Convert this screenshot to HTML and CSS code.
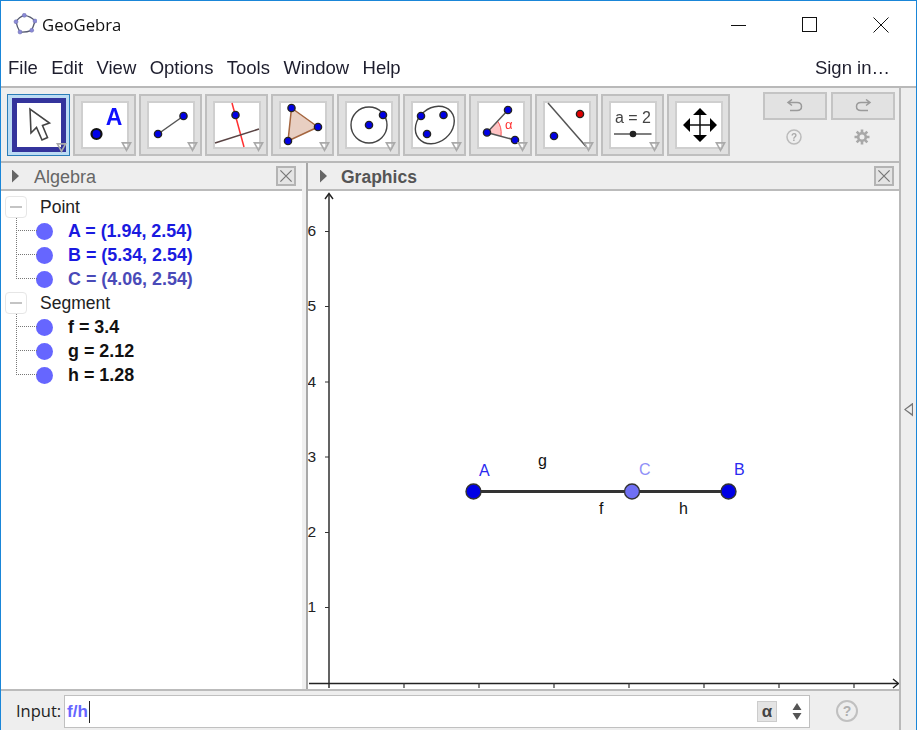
FILE: index.html
```html
<!DOCTYPE html>
<html lang="en">
<head>
<meta charset="utf-8">
<title>GeoGebra</title>
<link rel="stylesheet" href="styles.css">
</head>
<body>
<div class="window">
  <header class="titlebar">
    <svg class="app-logo" width="24" height="24" viewBox="0 0 24 24">
      <path class="logo-line" d="M11.300 2.300 Q17.500 3 22 8 Q20.500 13 18.700 17.300 Q13 19.500 7 19 Q4 14 3 8.700 Q6 4 11.300 2.300Z"/>
      <circle class="logo-dot" cx="11.300" cy="2.300" r="2"/>
      <circle class="logo-dot" cx="22" cy="8" r="2"/>
      <circle class="logo-dot" cx="18.700" cy="17.300" r="2"/>
      <circle class="logo-dot" cx="7" cy="19" r="2"/>
      <circle class="logo-dot" cx="3" cy="8.700" r="2"/>
    </svg>
    <span class="app-name">GeoGebra</span>
    <div class="window-controls">
      <svg class="wc wc-min" width="16" height="16" viewBox="0 0 16 16"><path d="M0 8.500H15"/></svg>
      <svg class="wc wc-max" width="16" height="16" viewBox="0 0 16 16"><rect x="0.500" y="0.500" width="14" height="14"/></svg>
      <svg class="wc wc-close" width="16" height="16" viewBox="0 0 16 16"><path d="M0.500 0.500L15.500 15.500M15.500 0.500L0.500 15.500"/></svg>
    </div>
  </header>

  <nav class="menubar">
    <span class="menu-item">File</span>
    <span class="menu-item">Edit</span>
    <span class="menu-item">View</span>
    <span class="menu-item">Options</span>
    <span class="menu-item">Tools</span>
    <span class="menu-item">Window</span>
    <span class="menu-item">Help</span>
    <span class="menu-item sign-in">Sign in…</span>
  </nav>

  <div class="workspace">
    <div class="content">
      <div class="toolbar">
        <div class="tools">
          <div class="tool tool-active"><div class="face face-active">
            <svg class="glyph" viewBox="0 0 44 44"><path class="cursor" d="M13 6L14 30L19.500 24.500L25 37L30.500 34.500L25.500 22.500L32.500 20Z"/></svg>
          </div><i class="caret"></i></div>

          <div class="tool"><div class="face">
            <svg class="glyph" viewBox="0 0 44 44"><circle class="pt pt-big" cx="13.500" cy="31" r="5"/><text class="big-a" x="31" y="22">A</text></svg>
          </div><i class="caret"></i></div>

          <div class="tool"><div class="face">
            <svg class="glyph" viewBox="0 0 44 44"><path class="ln" d="M9 31L34.500 13"/><circle class="pt" cx="9" cy="31" r="3.600"/><circle class="pt" cx="34.500" cy="13" r="3.600"/></svg>
          </div><i class="caret"></i></div>

          <div class="tool"><div class="face">
            <svg class="glyph" viewBox="0 0 44 44"><path class="ln-red" d="M17 0L29 44"/><path class="ln-brown" d="M0 40L44 26"/><circle class="pt" cx="20.500" cy="12" r="3.600"/></svg>
          </div><i class="caret"></i></div>

          <div class="tool"><div class="face">
            <svg class="glyph" viewBox="0 0 44 44"><path class="poly" d="M10.500 5L37 24L7 38Z"/><circle class="pt" cx="10.500" cy="5" r="3.600"/><circle class="pt" cx="37" cy="24" r="3.600"/><circle class="pt" cx="7" cy="38" r="3.600"/></svg>
          </div><i class="caret"></i></div>

          <div class="tool"><div class="face">
            <svg class="glyph" viewBox="0 0 44 44"><circle class="ring" cx="22" cy="22" r="18"/><circle class="pt" cx="22" cy="22" r="3.600"/><circle class="pt" cx="36" cy="12" r="3.600"/></svg>
          </div><i class="caret"></i></div>

          <div class="tool"><div class="face">
            <svg class="glyph" viewBox="0 0 44 44"><ellipse class="ring" cx="21.800" cy="22" rx="21" ry="17" transform="rotate(-40 21.800 22)"/><circle class="pt" cx="8" cy="13" r="3.600"/><circle class="pt" cx="30.500" cy="12" r="3.600"/><circle class="pt" cx="14" cy="31" r="3.600"/></svg>
          </div><i class="caret"></i></div>

          <div class="tool"><div class="face">
            <svg class="glyph" viewBox="0 0 44 44"><path class="wedge" d="M8 29.500L18.500 18Q23 24 22 33Z"/><path class="wedge-arc" d="M18.500 18Q23 24 22 33"/><path class="ln" d="M29 7L8 29.500L36 37"/><circle class="pt" cx="29" cy="7" r="3.600"/><circle class="pt" cx="8" cy="29.500" r="3.600"/><circle class="pt" cx="36" cy="37" r="3.600"/><text class="alpha" x="26" y="26">α</text></svg>
          </div><i class="caret"></i></div>

          <div class="tool"><div class="face">
            <svg class="glyph" viewBox="0 0 44 44"><path class="ln" d="M3 0L41 43.500"/><circle class="pt" cx="9" cy="33" r="3.600"/><circle class="pt pt-red" cx="35" cy="11" r="3.600"/></svg>
          </div><i class="caret"></i></div>

          <div class="tool"><div class="face">
            <svg class="glyph" viewBox="0 0 44 44"><text class="slider-text" x="22" y="20">a = 2</text><path class="ln" d="M3 31H40.500"/><circle class="knob" cx="22" cy="31" r="3.300"/></svg>
          </div><i class="caret"></i></div>

          <div class="tool"><div class="face">
            <svg class="glyph" viewBox="0 0 44 44"><path class="move-line" d="M23 8V36M9 22H37"/><path class="move-head" d="M23 5L30 12H16ZM23 39L30 32H16ZM6 22L13 15V29ZM40 22L33 15V29Z"/></svg>
          </div><i class="caret"></i></div>
        </div>

        <div class="history">
          <div class="history-row">
            <div class="hist-btn"><svg width="18" height="14" viewBox="0 0 18 14"><path class="hist-arrow" d="M2 3.500H11Q15.500 3.500 15.500 7.500Q15.500 11.500 11 11.500H4M6 0.500L2 3.500L6 6.500"/></svg></div>
            <div class="hist-btn"><svg width="18" height="14" viewBox="0 0 18 14"><path class="hist-arrow" d="M16 3.500H7Q2.500 3.500 2.500 7.500Q2.500 11.500 7 11.500H14M12 0.500L16 3.500L12 6.500"/></svg></div>
          </div>
          <div class="history-row history-icons">
            <div class="hist-icon">
              <svg width="16" height="16" viewBox="0 0 16 16"><circle class="help-ring" cx="8" cy="8" r="7"/><text class="help-mark" x="8" y="11.500">?</text></svg>
            </div>
            <div class="hist-icon">
              <svg width="16" height="16" viewBox="0 0 16 16"><path class="gear-teeth" d="M8 0.500V15.500M0.500 8H15.500M2.700 2.700L13.300 13.300M13.300 2.700L2.700 13.300"/><circle class="gear-body" cx="8" cy="8" r="3.800"/></svg>
            </div>
          </div>
        </div>
      </div>

      <div class="main">
        <section class="algebra">
          <div class="panel-header">
            <i class="tri"></i><span class="panel-title">Algebra</span>
            <svg class="close close-a" width="20" height="20" viewBox="0 0 20 20"><path d="M3 3L17 17M17 3L3 17"/></svg>
          </div>
          <div class="tree">
            <div class="category"><span class="expander"><i></i></span><span class="cat-name">Point</span></div>
            <div class="leaf"><i class="dot"></i><span class="val val-blue">A = (1.94, 2.54)</span></div>
            <div class="leaf"><i class="dot"></i><span class="val val-blue">B = (5.34, 2.54)</span></div>
            <div class="leaf leaf-last"><i class="dot"></i><span class="val val-dep">C = (4.06, 2.54)</span></div>
            <div class="category"><span class="expander"><i></i></span><span class="cat-name">Segment</span></div>
            <div class="leaf"><i class="dot"></i><span class="val">f = 3.4</span></div>
            <div class="leaf"><i class="dot"></i><span class="val">g = 2.12</span></div>
            <div class="leaf leaf-last"><i class="dot"></i><span class="val">h = 1.28</span></div>
          </div>
        </section>
        <div class="divider"></div>
        <section class="graphics">
          <div class="panel-header">
            <i class="tri tri-g"></i><span class="panel-title panel-title-g">Graphics</span>
            <svg class="close" width="20" height="20" viewBox="0 0 20 20"><path d="M3 3L17 17M17 3L3 17"/></svg>
          </div>
          <svg class="canvas" viewBox="308 191 591 498">
            <path class="axis" d="M329 194V688M309 683.500H898"/>
            <path class="axis-head" d="M325 199L329 193.500L333 199M893 679L898.500 683.500L893 688"/>
            <path class="tick" d="M325 231.500H329M325 306.500H329M325 382H329M325 457H329M325 532.500H329M325 607.500H329M404 683V688M479 683V688M554 683V688M629 683V688M704 683V688M779 683V688M854 683V688"/>
            <text class="ax-label" x="307.500" y="236">6</text>
            <text class="ax-label" x="307.500" y="311">5</text>
            <text class="ax-label" x="307.500" y="387">4</text>
            <text class="ax-label" x="307.500" y="462">3</text>
            <text class="ax-label" x="307.500" y="537">2</text>
            <text class="ax-label" x="307.500" y="612">1</text>
            <path class="segment" d="M473 491.500H728"/>
            <circle class="g-pt" cx="473.500" cy="491.500" r="7.500"/>
            <circle class="g-pt" cx="728.500" cy="491.500" r="7.500"/>
            <circle class="g-pt g-pt-dep" cx="632" cy="491.500" r="7.500"/>
            <text class="g-label g-blue" x="479" y="476">A</text>
            <text class="g-label g-blue" x="734" y="475">B</text>
            <text class="g-label g-light" x="639" y="475">C</text>
            <text class="g-label" x="538" y="466">g</text>
            <text class="g-label" x="599" y="514">f</text>
            <text class="g-label" x="679" y="514">h</text>
          </svg>
        </section>
      </div>

      <div class="inputbar">
        <label class="input-label">Input:</label>
        <div class="input-field">
          <span class="input-text">f/h</span><i class="text-cursor"></i>
          <span class="alpha-btn">α</span>
          <svg class="spinner" width="10" height="17" viewBox="0 0 10 17"><path d="M5 0L9.500 7H0.500ZM5 17L9.500 10H0.500Z"/></svg>
        </div>
        <svg class="input-help" width="24" height="24" viewBox="0 0 24 24"><circle class="help-ring help-ring-l" cx="12" cy="12" r="10"/><text class="help-mark help-mark-l" x="12" y="17">?</text></svg>
      </div>
    </div>
    <aside class="strip"><i class="strip-tri"></i></aside>
  </div>
</div>
</body>
</html>
```

FILE: styles.css
```css
* { box-sizing: border-box; }
html, body { margin: 0; padding: 0; }
body {
  width: 917px;
  height: 730px;
  overflow: hidden;
  background: #fff;
  font-family: "Liberation Sans", Arial, sans-serif;
  color: #111;
}
i { display: block; }

.window {
  width: 917px;
  height: 730px;
  display: flex;
  flex-direction: column;
  border: 1px solid #1a86d8;
  border-bottom: 0;
  filter: blur(0.35px);
}

/* title bar */
.titlebar {
  height: 49px;
  flex: none;
  display: flex;
  align-items: center;
  padding-left: 12px;
  padding-bottom: 2px;
}
.app-logo { flex: none; }
.logo-line { fill: none; stroke: #555a70; stroke-width: 1.300; }
.logo-dot { fill: #8a8ad8; stroke: #6a6aa8; stroke-width: 0.500; }
.app-name {
  margin-left: 5px;
  font: 16.700px "Open Sans", sans-serif;
  color: #111;
}
.window-controls {
  margin-left: auto;
  display: flex;
  align-items: center;
  padding-right: 27px;
  gap: 55px;
}
.wc { fill: none; stroke: #111; stroke-width: 1; display: block; }

/* menu */
.menubar {
  height: 36px;
  flex: none;
  display: flex;
  align-items: center;
  padding-left: 7px;
  padding-right: 26px;
  gap: 13.400px;
  font-size: 18.500px;
  color: #1d1d2d;
}
.menu-item { line-height: 36px; }
.sign-in { margin-left: auto; }

/* workspace */
.workspace { flex: 1; min-height: 0; display: flex; }
.content { flex: 1; min-width: 0; display: flex; flex-direction: column; }
.strip {
  width: 17px;
  flex: none;
  background: #eee;
  border-left: 2px solid #b9b9b9;
  border-top: 2px solid #b9b9b9;
  display: flex;
  align-items: center;
  justify-content: center;
  padding-top: 1px;
}
.strip-tri {
  width: 9px;
  height: 14px;
  background: #777;
  clip-path: polygon(100% 0, 100% 100%, 0 50%, 100% 0, 88% 20%, 20% 50%, 88% 80%, 88% 20%);
}

/* toolbar */
.toolbar {
  height: 77px;
  flex: none;
  background: #eee;
  border-top: 2px solid #b9b9b9;
  border-bottom: 2px solid #b9b9b9;
  display: flex;
  padding: 4px 0 0 6px;
}
.tools { display: flex; gap: 3px; padding-top: 2px; }
.tool {
  position: relative;
  width: 63px;
  height: 62px;
  background: #e0e0e0;
  border: 2px solid #bfbfbf;
  display: flex;
  align-items: center;
  justify-content: center;
}
.face {
  width: 48px;
  height: 48px;
  background: #fff;
  border: 2px solid #cfcfcf;
}
.tool-active {
  background: #bcdcf4;
  border: 1px solid #2b7db8;
}
.face-active {
  width: 54px;
  height: 54px;
  border: 5px solid #34349c;
  display: flex;
  align-items: center;
  justify-content: center;
}
.glyph { width: 44px; height: 44px; display: block; overflow: visible; }
.caret {
  position: absolute;
  right: 2px;
  bottom: 2px;
  width: 11px;
  height: 10px;
  background: #aaa;
  clip-path: polygon(0 0, 100% 0, 50% 100%, 0 0, 25% 18%, 50% 68%, 75% 18%, 25% 18%);
}

.cursor { fill: #fff; stroke: #444; stroke-width: 1.600; stroke-linejoin: miter; }
.pt { fill: #0000e6; stroke: #222; stroke-width: 1.400; }
.pt-big { stroke: #111; stroke-width: 2.200; }
.pt-red { fill: #e00000; }
.ln { stroke: #555; stroke-width: 1.500; fill: none; }
.ln-red { stroke: #ff3030; stroke-width: 1.500; fill: none; }
.ln-brown { stroke: #5a4444; stroke-width: 1.500; fill: none; }
.poly { fill: #e8cfc2; stroke: #a5663f; stroke-width: 1.500; }
.ring { fill: none; stroke: #444; stroke-width: 1.400; }
.wedge { fill: #ffc4c4; }
.wedge-arc { fill: none; stroke: #ff5050; stroke-width: 1; }
.alpha { fill: #ff3030; font: 13px "Liberation Sans", sans-serif; }
.big-a { fill: #1010ff; font: bold 23px "Liberation Sans", sans-serif; text-anchor: middle; }
.slider-text { fill: #444; font: 16px "Liberation Sans", sans-serif; text-anchor: middle; }
.knob { fill: #222; }
.move-line { stroke: #111; stroke-width: 1.500; fill: none; }
.move-head { fill: #000; }

/* history */
.history {
  margin-left: 33px;
  width: 132px;
  display: flex;
  flex-direction: column;
}
.history-row { display: flex; gap: 4px; }
.hist-btn {
  width: 64px;
  height: 28px;
  background: #e2e2e2;
  border: 2px solid #c4c4c4;
  display: flex;
  align-items: center;
  justify-content: center;
}
.hist-arrow { fill: none; stroke: #9a9a9a; stroke-width: 1.500; }
.history-icons { margin-top: 9px; }
.hist-icon { width: 64px; height: 16px; display: flex; justify-content: center; padding-right: 2px; }
.help-ring { fill: none; stroke: #bbb; stroke-width: 1.500; }
.help-mark { fill: #aaa; font: bold 10px "Liberation Sans", sans-serif; text-anchor: middle; }
.gear-teeth { stroke: #a8a8a8; stroke-width: 2.600; fill: none; }
.gear-body { fill: #eee; stroke: #a8a8a8; stroke-width: 2.600; }

/* main area */
.main { flex: 1; min-height: 0; display: flex; background: #fff; }
.algebra { width: 301px; flex: none; display: flex; flex-direction: column; }
.divider { width: 6px; flex: none; background: #f0f0f0; border-right: 2px solid #a8a8a8; }
.graphics { flex: 1; min-width: 0; display: flex; flex-direction: column; }
.panel-header {
  height: 28px;
  flex: none;
  background: #eee;
  border-bottom: 2px solid #bbb;
  display: flex;
  align-items: center;
}
.tri {
  width: 7px;
  height: 13px;
  margin-left: 11px;
  background: #666;
  clip-path: polygon(0 0, 100% 50%, 0 100%);
}
.tri-g { margin-left: 12px; }
.panel-title { margin-left: 15px; padding-top: 2px; font-size: 18px; color: #666; }
.panel-title-g { margin-left: 14px; font-weight: bold; font-size: 17.500px; color: #555; }
.close {
  margin-left: auto;
  margin-right: 5px;
  display: block;
  background: #e4e4e4;
  border: 2px solid #b4b4b4;
  fill: none;
  stroke: #777;
  stroke-width: 1.500;
}
.close-a { margin-right: 6px; }

/* tree */
.tree { padding-top: 4px; padding-left: 4px; }
.category { height: 24px; display: flex; align-items: center; font-size: 17.500px; }
.expander {
  width: 22px;
  height: 22px;
  background: #fff;
  border: 1px solid #e6e6e6;
  border-radius: 4px;
  display: flex;
  align-items: center;
  justify-content: center;
}
.expander i { width: 12px; height: 2px; background: #c4c4c4; }
.cat-name { margin-left: 13px; color: #222; }
.leaf {
  position: relative;
  height: 24px;
  display: flex;
  align-items: center;
  padding-left: 31px;
}
.leaf::before {
  content: "";
  position: absolute;
  left: 11px;
  top: 11px;
  width: 21px;
  border-top: 1px dotted #777;
}
.leaf::after {
  content: "";
  position: absolute;
  left: 11px;
  top: -1px;
  height: 25px;
  border-left: 1px dotted #777;
}
.leaf-last::after { height: 13px; }
.dot { width: 17px; height: 17px; border-radius: 50%; background: #6666ff; }
.val { margin-left: 15px; font-weight: bold; font-size: 17.900px; color: #111; }
.val-blue { color: #1a1ae0; }
.val-dep { color: #4a4ab8; }

/* canvas */
.canvas { flex: 1; min-height: 0; width: 100%; display: block; }
.axis { stroke: #222; stroke-width: 1.400; fill: none; }
.axis-head { stroke: #222; stroke-width: 1.400; fill: none; }
.tick { stroke: #333; stroke-width: 1.200; fill: none; }
.ax-label { font: 15.500px "Liberation Sans", sans-serif; fill: #222; }
.segment { stroke: #333; stroke-width: 3; fill: none; }
.g-pt { fill: #0000e6; stroke: #333; stroke-width: 1.400; }
.g-pt-dep { fill: #7070f4; }
.g-label { font: 16px "Liberation Sans", sans-serif; fill: #111; }
.g-blue { fill: #2a2af0; }
.g-light { fill: #8f8ff8; }

/* input bar */
.inputbar {
  height: 41px;
  flex: none;
  background: #eee;
  border-top: 2px solid #bbb;
  display: flex;
  align-items: center;
  padding-left: 15px;
}
.input-label { width: 48px; font: 16.500px "Open Sans", sans-serif; color: #222; }
.input-field {
  width: 746px;
  height: 33px;
  margin-top: 2px;
  background: #fff;
  border: 1px solid #c0c0c0;
  display: flex;
  align-items: center;
  padding-left: 2px;
}
.input-text { font-weight: bold; font-size: 17px; color: #6666ff; }
.text-cursor { width: 1.500px; height: 22px; background: #222; margin-left: 1px; }
.alpha-btn {
  margin-left: auto;
  width: 20px;
  height: 21px;
  background: #e4e4e4;
  border: 1px solid #ccc;
  text-align: center;
  font: bold 17px/19px "Liberation Sans", sans-serif;
  color: #444;
}
.spinner { margin: 0 7px 0 15px; fill: #555; display: block; }
.input-help { margin-left: 25px; margin-top: 1px; display: block; }
.help-ring-l { stroke: #c0c0c0; stroke-width: 2; }
.help-mark-l { font-size: 14px; fill: #b0b0b0; }
```
